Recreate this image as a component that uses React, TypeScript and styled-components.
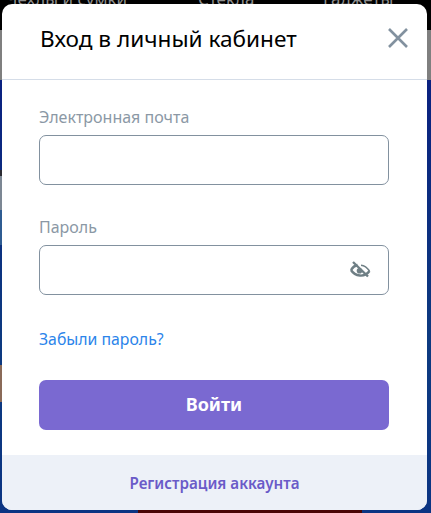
import React from 'react';
import styled, { createGlobalStyle } from 'styled-components';

const GlobalStyle = createGlobalStyle`
	html, body {
		margin: 0;
		padding: 0;
		height: 100%;
		overflow: hidden;
		background: #0a2f80;
		font-family: 'Noto Sans', 'Open Sans', sans-serif;
	}
	* {
		box-sizing: border-box;
	}
`;

const Page = styled.div`
	width: 431px;
	height: 513px;
	display: flex;
	flex-direction: column;
	overflow: hidden;
`;

const Nav = styled.nav`
	height: 30px;
	flex: none;
	background: #000;
	color: #8f8f8f;
	font-size: 17px;
	line-height: 14px;
	display: flex;
	padding-left: 6px;
	overflow: hidden;
`;

const NavItem = styled.span<{ $width: number }>`
	width: ${(props) => props.$width}px;
	flex: none;
	margin-top: -8px;
	white-space: nowrap;
`;

const Strip = styled.div`
	height: 50px;
	flex: none;
	background: #7f7f7f;
`;

const Hero = styled.div`
	flex: 1;
	background:
		linear-gradient(
				180deg,
				transparent 0 90px,
				#2b2b33 90px 96px,
				#7c8794 96px 130px,
				#2f5c92 130px 165px,
				transparent 165px 285px,
				#8a6a58 285px 322px,
				transparent 322px
			)
			0 0 / 2px 100% no-repeat,
		linear-gradient(180deg, #0a2180 0%, #0d3a80 60%, #0b3483 100%);
	display: flex;
	align-items: flex-end;
	padding-left: 138px;
`;

const HeroShape = styled.div`
	width: 224px;
	height: 3px;
	background: #4a0505;
`;

const Modal = styled.div`
	position: absolute;
	left: 2px;
	top: 4px;
	width: 425px;
	height: 506px;
	background: #fff;
	border-radius: 10px;
	display: flex;
	flex-direction: column;
	overflow: hidden;
`;

const Header = styled.header`
	height: 76px;
	flex: none;
	display: flex;
	align-items: center;
	justify-content: space-between;
	padding: 0 19px 7px 38px;
	border-bottom: 1px solid #d5dde8;
`;

const Title = styled.h2`
	margin: 0;
	font-size: 22.6px;
	font-weight: 400;
	color: #000;
`;

const CloseButton = styled.button`
	width: 20px;
	height: 20px;
	padding: 0;
	border: 0;
	background: none;
	display: flex;
	color: #82919f;
`;

const Form = styled.form`
	flex: 1;
	display: flex;
	flex-direction: column;
	padding: 26px 38px 0 37px;
`;

const Field = styled.div`
	display: flex;
	flex-direction: column;
	margin-bottom: 31px;

	&:last-of-type {
		margin-bottom: 23px;
	}
`;

const Label = styled.label`
	font-size: 16px;
	line-height: 22px;
	color: #8b98a5;
	margin-bottom: 7px;
`;

const InputBox = styled.div`
	height: 50px;
	border: 1px solid #82919f;
	border-radius: 7px;
	display: flex;
	align-items: center;
	justify-content: flex-end;
	padding-right: 17px;
`;

const EyeIcon = styled.svg`
	width: 22px;
	height: 20px;
	color: #6f7f85;
`;

const ForgotLink = styled.a`
	font-size: 15.8px;
	line-height: 22px;
	color: #2b84ea;
	margin-top: 10px;
`;

const Submit = styled.button`
	height: 50px;
	margin-top: 30px;
	padding: 0 0 2px;
	border: 0;
	border-radius: 7px;
	background: #7a69d1;
	color: #fff;
	font-family: inherit;
	font-size: 18px;
	font-weight: 700;
`;

const Footer = styled.footer`
	height: 55px;
	flex: none;
	background: #edf1f8;
	display: flex;
	align-items: center;
	justify-content: center;
	color: #6a5bc8;
	font-size: 15.2px;
	font-weight: 600;
`;

const App = () => {
	return (
		<>
			<GlobalStyle />
			<Page>
				<Nav>
					<NavItem $width={192}>Чехлы и сумки</NavItem>
					<NavItem $width={125}>Стекла</NavItem>
					<NavItem $width={90}>Гаджеты</NavItem>
				</Nav>
				<Strip />
				<Hero>
					<HeroShape />
				</Hero>
			</Page>
			<Modal>
				<Header>
					<Title>Вход в личный кабинет</Title>
					<CloseButton type="button" aria-label="Закрыть">
						<svg width="20" height="20" viewBox="0 0 20 20" fill="none">
							<path d="M1 1 L19 19 M19 1 L1 19" stroke="currentColor" strokeWidth="2.6" />
						</svg>
					</CloseButton>
				</Header>
				<Form>
					<Field>
						<Label>Электронная почта</Label>
						<InputBox />
					</Field>
					<Field>
						<Label>Пароль</Label>
						<InputBox>
							<EyeIcon viewBox="0 0 22 20" fill="none">
								<path d="M2 10 C3.5 7.5 6 5.5 8.5 5" stroke="currentColor" strokeWidth="2.4" />
								<path d="M12 5.2 C15.5 5.5 18.5 8 20.5 11" stroke="currentColor" strokeWidth="1.6" />
								<path d="M2 10 C6 16.5 15.5 18 20.5 11" stroke="currentColor" strokeWidth="2.4" />
								<circle cx="10.5" cy="10.8" r="2.8" fill="currentColor" />
								<path d="M4 2 L19 16.5" stroke="currentColor" strokeWidth="2.4" />
							</EyeIcon>
						</InputBox>
					</Field>
					<ForgotLink>Забыли пароль?</ForgotLink>
					<Submit type="button">Войти</Submit>
				</Form>
				<Footer>Регистрация аккаунта</Footer>
			</Modal>
		</>
	);
};

export default App;
